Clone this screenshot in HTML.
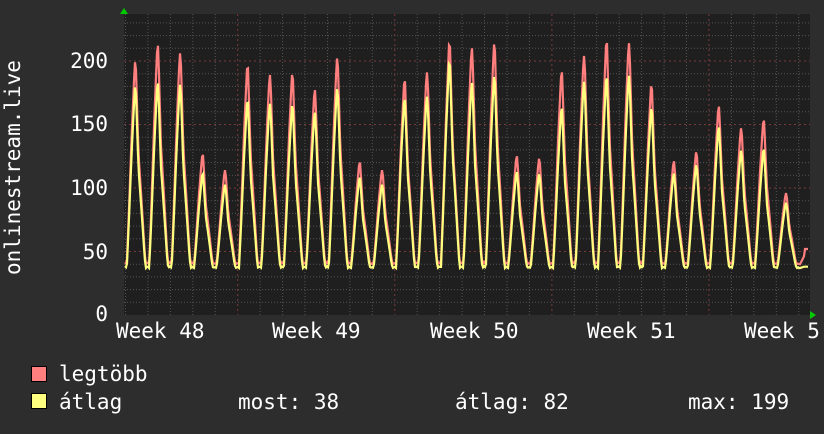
<!DOCTYPE html>
<html><head><meta charset="utf-8"><style>
body{margin:0;background:#2d2d2d;width:824px;height:430px;overflow:hidden;font-family:"DejaVu Sans Mono","Liberation Mono",monospace;color:#fff}
svg text{font-family:"DejaVu Sans Mono","Liberation Mono",monospace;fill:#fff;font-size:21px}
</style></head><body>
<svg id="s" width="824" height="430" xmlns="http://www.w3.org/2000/svg">
<rect x="0" y="0" width="824" height="430" fill="#2d2d2d"/>
<rect x="124" y="14" width="686" height="301" fill="#1f1f1f"/>
<g id="grid"></g>
<polyline id="mx" fill="none" stroke="#ff7f7f" stroke-width="2.2" points=""/>
<polyline id="av" fill="none" stroke="#ffff7f" stroke-width="2.2" points=""/>
<polygon points="120,14 124,8 128,14" fill="#00cc00"/>
<polygon points="810,311 816,315 810,319" fill="#00cc00"/>
<g text-anchor="end">
<text x="108" y="321">0</text>
<text x="108" y="259">50</text>
<text x="108" y="195">100</text>
<text x="108" y="131">150</text>
<text x="108" y="68">200</text>
</g>
<text x="116" y="338">Week 48</text>
<text x="272" y="338">Week 49</text>
<text x="430" y="338">Week 50</text>
<text x="587" y="338">Week 51</text>
<text x="744" y="338">Week 5</text>
<text transform="translate(20,275) rotate(-90)">onlinestream.live</text>
<rect x="31.5" y="366.5" width="15" height="15" fill="#ff7f7f" stroke="#000"/>
<rect x="31.5" y="393.5" width="15" height="15" fill="#ffff7f" stroke="#000"/>
<text x="59" y="381">legtöbb</text>
<text x="59" y="409">átlag</text>
<text x="238" y="409">most: 38</text>
<text x="455" y="409">átlag: 82</text>
<text x="688" y="409">max: 199</text>
</svg>
<script>
var g=document.getElementById('grid'),h='';
function Y(v){return 315-v*1.27;}
for(var v=10;v<=230;v+=10){var y=Y(v);if(y<14)break;var maj=v%50==0;
h+='<line x1="124" x2="810" y1="'+y.toFixed(1)+'" y2="'+y.toFixed(1)+'" stroke="'+(maj?'#7a3a3a':'#555')+'" stroke-width="1" stroke-dasharray="'+(maj?'2,3':'1,2')+'"/>';}
for(var x=125.5;x<810;x+=22.44){
var maj=Math.abs(((x-238)/157.1)-Math.round((x-238)/157.1))<0.05;
h+='<line y1="14" y2="315" x1="'+x.toFixed(1)+'" x2="'+x.toFixed(1)+'" stroke="'+(maj?'#7a3a3a':'#555')+'" stroke-width="1" stroke-dasharray="'+(maj?'2,3':'1,2')+'"/>';}
g.innerHTML=h;
var P=[199,212,206,126,114,195,189,189,177,202,120,114,184,191,213,210,213,125,123,191,204,214,214,180,121,128,164,147,153,96,52];
var R=[0.9,0.86,0.88,0.88,0.9,0.86,0.88,0.87,0.9,0.88,0.9,0.9,0.92,0.9,0.93,0.87,0.88,0.9,0.9,0.85,0.9,0.87,0.88,0.9,0.92,0.92,0.9,0.88,0.85,0.92,0.75];
var T=[[0,0.01],[0.08,0],[0.17,0.25],[0.3,0.65],[0.41,0.93],[0.44,1],[0.48,1],[0.52,0.85],[0.6,0.55],[0.7,0.38],[0.8,0.2],[0.88,0.05],[0.93,0],[1,0.01]];
function tmpl(t){for(var i=1;i<T.length;i++){if(t<=T[i][0]){var a=T[i-1],b=T[i];return a[1]+(b[1]-a[1])*(t-a[0])/(b[0]-a[0]);}}return 0;}
var pm=[],pa=[];
for(var x=125;x<=808;x+=1){var d=(x-125)/22.44,k=Math.floor(d),t=d-k;var kk=Math.min(k,P.length-1);var p=P[kk];
var f=tmpl(t);var vm=40+(p-40)*f, va=37+(p*R[kk]-37)*f;
if(x>=805){vm=52;va=38;}
pm.push(x+','+Y(vm).toFixed(1));pa.push(x+','+Y(va).toFixed(1));}
document.getElementById('mx').setAttribute('points',pm.join(' '));
document.getElementById('av').setAttribute('points',pa.join(' '));
</script>
</body></html>
